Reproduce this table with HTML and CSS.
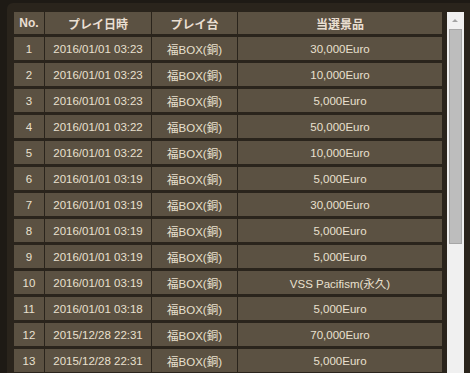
FILE: index.html
```html
<!DOCTYPE html>
<html lang="ja">
<head>
    <meta charset="UTF-8">
    <title>プレイ履歴</title>
    <link rel="stylesheet" href="styles.css">
</head>
<body>
    <div class="panel">
        <div class="history">
            <table class="history-table">
                <thead>
                    <tr>
                        <th class="col-no">No.</th>
                        <th class="col-date">プレイ日時</th>
                        <th class="col-box">プレイ台</th>
                        <th class="col-prize">当選景品</th>
                    </tr>
                </thead>
                <tbody>
                    <tr><td>1</td><td>2016/01/01 03:23</td><td>福BOX(銅)</td><td>30,000Euro</td></tr>
                    <tr><td>2</td><td>2016/01/01 03:23</td><td>福BOX(銅)</td><td>10,000Euro</td></tr>
                    <tr><td>3</td><td>2016/01/01 03:23</td><td>福BOX(銅)</td><td>5,000Euro</td></tr>
                    <tr><td>4</td><td>2016/01/01 03:22</td><td>福BOX(銅)</td><td>50,000Euro</td></tr>
                    <tr><td>5</td><td>2016/01/01 03:22</td><td>福BOX(銅)</td><td>10,000Euro</td></tr>
                    <tr><td>6</td><td>2016/01/01 03:19</td><td>福BOX(銅)</td><td>5,000Euro</td></tr>
                    <tr><td>7</td><td>2016/01/01 03:19</td><td>福BOX(銅)</td><td>30,000Euro</td></tr>
                    <tr><td>8</td><td>2016/01/01 03:19</td><td>福BOX(銅)</td><td>5,000Euro</td></tr>
                    <tr><td>9</td><td>2016/01/01 03:19</td><td>福BOX(銅)</td><td>5,000Euro</td></tr>
                    <tr><td>10</td><td>2016/01/01 03:19</td><td>福BOX(銅)</td><td>VSS Pacifism(永久)</td></tr>
                    <tr><td>11</td><td>2016/01/01 03:18</td><td>福BOX(銅)</td><td>5,000Euro</td></tr>
                    <tr><td>12</td><td>2015/12/28 22:31</td><td>福BOX(銅)</td><td>70,000Euro</td></tr>
                    <tr><td>13</td><td>2015/12/28 22:31</td><td>福BOX(銅)</td><td>5,000Euro</td></tr>
                </tbody>
            </table>
        </div>
        <div class="scrollbar">
            <div class="scroll-arrow"></div>
            <div class="scroll-thumb"></div>
        </div>
    </div>
</body>
</html>
```

FILE: styles.css
```css
html, body {
    height: 100%;
}
body {
    margin: 0;
    background-color: #1e1a15;
    overflow: hidden;
    font-family: "Liberation Sans", "Noto Sans CJK JP", sans-serif;
    color: #e9e0cf;
}
.panel {
    display: flex;
    align-items: flex-start;
    margin: 3px 0 0 7px;
    padding: 6px 6px 0 6px;
    height: 100%;
    box-sizing: border-box;
    background-color: #2a241c;
    border-top-left-radius: 6px;
}
.history {
    width: 430px;
    overflow: hidden;
}
.history-table {
    border-collapse: separate;
    border-spacing: 1px 3px;
    table-layout: fixed;
    width: 430px;
    font-size: 11.5px;
}
.history-table th,
.history-table td {
    background-color: #5b5142;
    text-align: center;
    padding: 0;
    white-space: nowrap;
}
.history-table th {
    height: 22px;
    font-weight: bold;
    font-size: 12px;
    color: #eadfd2;
}
.history-table td {
    height: 23px;
}
.col-no { width: 30px; }
.col-date { width: 106px; }
.col-box { width: 85px; }
.col-prize { width: 204px; }

/* classic scrollbar drawn beside the list */
.scrollbar {
    position: relative;
    width: 17px;
    height: 400px;
    margin-top: 3px;
    margin-left: 4px;
    background-color: #f0f0f0;
}
.scroll-arrow {
    position: absolute;
    left: 5px;
    top: 7px;
    width: 0;
    height: 0;
    border-left: 3.5px solid transparent;
    border-right: 3.5px solid transparent;
    border-bottom: 3.5px solid #a3a3a3;
}
.scroll-thumb {
    position: absolute;
    left: 2px;
    top: 17px;
    width: 11px;
    height: 213px;
    background-color: #bdbdbd;
    border: 1px solid #a6a6a6;
}
```
